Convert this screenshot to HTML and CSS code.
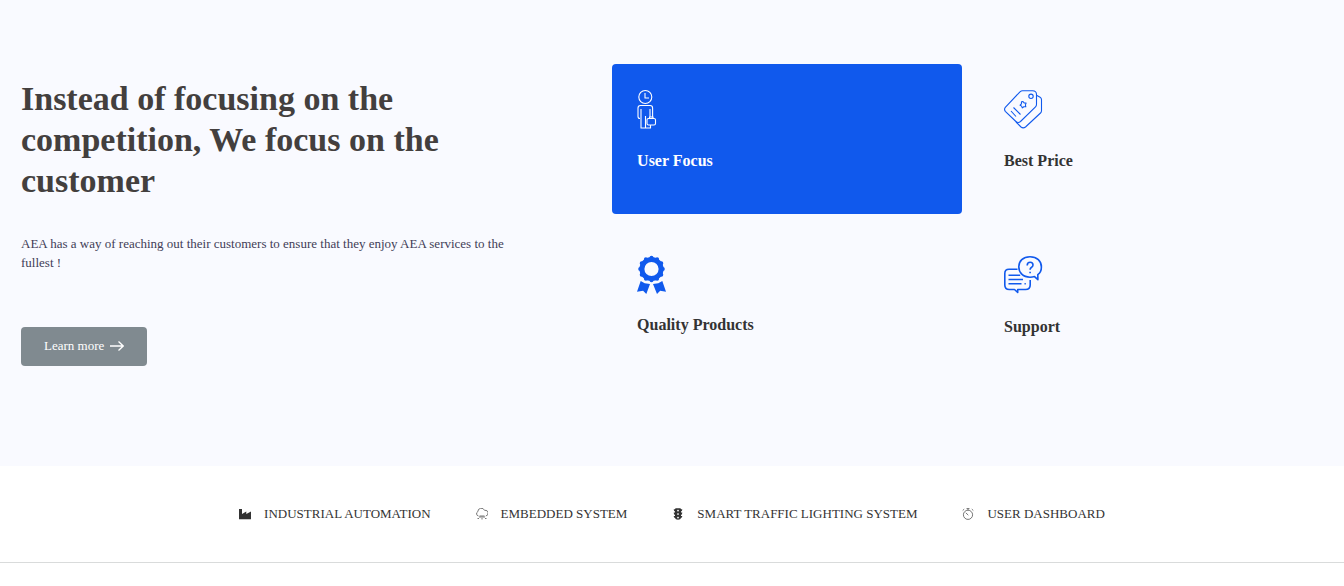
FILE: index.html
```html
<!DOCTYPE html>
<html lang="en">
<head>
<meta charset="utf-8">
<meta name="viewport" content="width=device-width, initial-scale=1">
<title>AEA</title>
<link rel="stylesheet" href="styles.css">
</head>
<body>
<section class="focus">
  <div class="intro">
    <h1 class="intro-title">Instead of focusing on the competition, We focus on the customer</h1>
    <p class="intro-text">AEA has a way of reaching out their customers to ensure that they enjoy AEA services to the fullest !</p>
    <button class="learn" type="button">Learn more
      <svg class="arrow" viewBox="0 0 14 12" aria-hidden="true"><path d="M0 6h13M8.500 1.500L13.200 6l-4.700 4.500"/></svg>
    </button>
  </div>
  <div class="features">
    <article class="card card-active">
      <svg class="card-icon" viewBox="0 0 38 38" aria-hidden="true">
        <circle cx="8.300" cy="7" r="6.500"/><path d="M8 3v5h4"/>
        <path d="M3 28.500Q1 28.500 1 26.500V18q0-2.500 2.500-2.500h9.600q2.500 0 2.500 2.500v9.500M4 19v19h9.500v-3M8.500 26v12M13 19v8"/>
        <rect x="10" y="28.500" width="8.500" height="6.500" rx="1.500"/><path d="M12.500 28.500v-1.500h3.500v1.500"/>
      </svg>
      <h2 class="card-title">User Focus</h2>
    </article>
    <article class="card">
      <svg class="card-icon" viewBox="0 0 38 38" aria-hidden="true">
        <path d="M18.500.8H28.500Q32.500 1 32.500 4.500V14.500q0 1.300-1 2.300L16.500 31.500q-2.300 2-4.600 0L1.300 21.300q-1.500-2 0-4L16 1.800q1.200-1 2.500-1Z"/>
        <path d="M32.500 5.300l3.600 1.900q1.400.8 1.400 2.500v11q0 1.300-1 2.300L21.500 37q-2.300 1.700-4.500 0L12 32"/>
        <circle cx="27" cy="6.300" r="2.200"/>
        <path d="M19 11.500l1.100 1.400 2 .2-.7 1.800.4 1.900-2-.1-1.500 1.200-.7-1.800-1.500-.9 1.300-1.300.1-2z"/>
        <path d="M9.500 17.500l7 7M7 21l5 5.500"/>
      </svg>
      <h2 class="card-title">Best Price</h2>
    </article>
    <article class="card">
      <svg class="card-icon card-icon-seal" viewBox="0 0 38 38" aria-hidden="true">
        <circle class="seal-ring" cx="14.500" cy="13" r="9.600"/>
        <circle class="seal-bumps" cx="14.500" cy="13" r="11.300" pathLength="120"/>
        <path class="seal-ribbon" d="M3.700 25l4 2.200 5.300.8-3.700 10-3.200-3.300L0 35.800zM25.300 25l-4 2.200-5.300.8 4 10 3.200-3.300 5.800 1.100z"/>
      </svg>
      <h2 class="card-title">Quality Products</h2>
    </article>
    <article class="card">
      <svg class="card-icon card-icon-bold" viewBox="0 0 38 38" aria-hidden="true">
        <path d="M26 .8c-7 0-11.200 4.200-11.200 10S19 21.200 26 21.200q2.500 0 4.500-.6l3.400 3-.1-4.900C36.300 17 37.400 14 37.400 11 37.400 5 33 .8 26 .8Z"/>
        <path d="M13.500 13.300H5q-4.200 0-4.200 4.200V29q0 4.500 4.500 4.500h5.200l3.200 3v-3h7.800q4.700 0 4.700-4.500v-5"/>
        <path d="M4.500 19.200h11.700M4.500 23.500h14.500M4.500 27.700h13M20.500 27.700h1.300M23.200 9.500q0-3.200 3-3.200 2.800 0 2.800 2.700 0 1.500-1.700 2.500-1.200.8-1.200 2.300M26.100 15.800v1.400"/>
      </svg>
      <h2 class="card-title">Support</h2>
    </article>
  </div>
</section>
<nav class="services" aria-label="Services">
  <a class="service" href="#industrial">
    <svg class="service-icon" viewBox="0 0 12 12" aria-hidden="true"><path fill="currentColor" d="M0 1h3v5l4.300-2.500V6l4.700-2.500V11.200H0z"/></svg>
    INDUSTRIAL AUTOMATION</a>
  <a class="service" href="#embedded">
    <svg class="service-icon service-icon-line" viewBox="0 0 12 12" aria-hidden="true"><path d="M2.500 8A2.300 2.300 0 0 1 1.800 3.700a3.500 3.500 0 0 1 6.700-1.400A2.800 2.800 0 0 1 9.800 8M3.500 8h5M4 8v2M6 8v3.500M8 8v2M1.500 10.500h1.500M9 10.500h1.500"/></svg>
    EMBEDDED SYSTEM</a>
  <a class="service" href="#traffic">
    <svg class="service-icon" viewBox="0 0 12 12" aria-hidden="true"><path fill="currentColor" fill-rule="evenodd" d="M4 .3h4q1 0 1 1h1.300Q10.300 3 9 3.500v1h1.300Q10.300 6.500 9 7v1h1.300Q10.300 9.500 9 10q-.3 1.800-3 1.800T3 10Q1.700 9.500 1.700 8H3V7Q1.700 6.500 1.700 4.500H3v-1Q1.700 3 1.700 1.300H3q0-1 1-1zM6 1.700a.8.8 0 1 0 .01 0zM6 5.200a.8.8 0 1 0 .01 0zM6 8.700a.8.8 0 1 0 .01 0z"/></svg>
    SMART TRAFFIC LIGHTING SYSTEM</a>
  <a class="service" href="#dashboard">
    <svg class="service-icon service-icon-line" viewBox="0 0 12 12" aria-hidden="true"><circle cx="6" cy="6.800" r="4.600"/><path d="M6 2.200V.6M4.500.6h3M3.800 4.800L6.300 7.200M.7 2.500l1.500-1.400M9.800 1.100l1.500 1.400"/></svg>
    USER DASHBOARD</a>
</nav>
</body>
</html>
```
FILE: styles.css
```css
* { box-sizing: border-box; }

body {
  margin: 0;
  background: #fff;
  color: #333;
  font-family: "Liberation Serif", "Times New Roman", serif;
}

.focus {
  display: grid;
  grid-template-columns: 5fr 7fr;
  gap: 79px;
  padding: 64px 15px 86px 21px;
  background: #f9faff;
}

.intro { padding-top: 14px; }

.intro-title {
  margin: 0 0 33px;
  color: #433f3e;
  font-size: 34px;
  line-height: 41px;
}

.intro-text {
  margin: 0 0 55px;
  color: #423d57;
  font-size: 13px;
  line-height: 19px;
}

.learn {
  display: inline-flex;
  align-items: center;
  gap: 6px;
  height: 39px;
  padding: 0 23px 2px;
  border: 0;
  border-radius: 4px;
  background: #808a90;
  color: #fff;
  font-family: inherit;
  font-size: 13px;
}

.arrow {
  width: 14px;
  height: 12px;
  fill: none;
  stroke: currentColor;
  stroke-width: 1.3;
}

.features {
  display: grid;
  grid-template-columns: 1fr 1fr;
  grid-auto-rows: 150px;
  gap: 16px 17px;
}

.card {
  padding: 26px 25px;
  border-radius: 4px;
  color: #333;
}

.card-active {
  background: #1059ed;
  color: #fff;
}

.card-icon {
  display: block;
  width: 38px;
  height: 38px;
  overflow: visible;
  fill: none;
  stroke: #1059ed;
  stroke-width: 1.1;
  stroke-linejoin: round;
}

.card-active .card-icon { stroke: #fff; }
.card-icon-bold { stroke-width: 1.6; }

.seal-ring { stroke-width: 5; }

.seal-bumps {
  stroke-width: 4;
  stroke-linecap: round;
  stroke-dasharray: 0 10;
}

.seal-ribbon {
  fill: #1059ed;
  stroke: #f9faff;
  stroke-width: 0;
}

.card-title {
  margin: 23px 0 0;
  font-size: 16px;
  line-height: 20px;
}

.card-icon-seal + .card-title { margin-top: 21px; }

.services {
  display: flex;
  justify-content: center;
  gap: 45px;
  padding: 38px 16px;
  border-bottom: 1px solid #d9dbdb;
}

.service {
  display: flex;
  align-items: center;
  gap: 13px;
  color: #333;
  font-size: 13px;
  line-height: 20px;
  text-decoration: none;
}

.service-icon { width: 12px; height: 12px; }

.service-icon-line {
  fill: none;
  stroke: #555;
  stroke-width: .8;
}
```
